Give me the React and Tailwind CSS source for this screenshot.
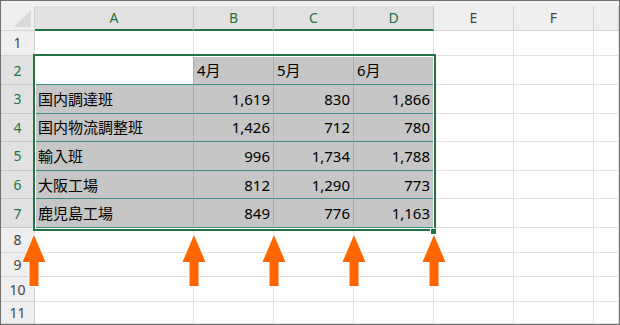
import React from 'react'

const cols = ['A', 'B', 'C', 'D', 'E', 'F', '']
const colWidths = ['w-[159px]', 'w-[80px]', 'w-[80px]', 'w-[80px]', 'w-[80px]', 'w-[80px]', 'flex-1']

const data = [
  ['', '4月', '5月', '6月'],
  ['国内調達班', '1,619', '830', '1,866'],
  ['国内物流調整班', '1,426', '712', '780'],
  ['輸入班', '996', '1,734', '1,788'],
  ['大阪工場', '812', '1,290', '773'],
  ['鹿児島工場', '849', '776', '1,163'],
]

const rowHeights = {
  1: 'h-[26px]',
  8: 'h-[25px]',
  9: 'h-[25px]',
  10: 'h-[25px]',
  11: 'flex-1',
}

const arrowXs = [34, 194, 274, 354, 434]

const Arrow = ({ cx }) => {
  const pts = [
    [cx, 235],
    [cx + 11.5, 262],
    [cx + 4.5, 262],
    [cx + 4.5, 286],
    [cx - 4.5, 286],
    [cx - 4.5, 262],
    [cx - 11.5, 262],
  ]
  return (
    <polygon
      points={pts.map((p) => p.join(',')).join(' ')}
      fill="#ff6600"
      stroke="#ffffff"
      strokeWidth="2"
      strokeLinejoin="round"
      style={{ paintOrder: 'stroke' }}
    />
  )
}

const Cell = ({ row, col }) => {
  const selected = row >= 2 && row <= 7 && col <= 3
  const width = colWidths[col]
  if (!selected) {
    return <div className={`${width} border-r border-b border-[#e1e1e1] bg-white`} />
  }
  const text = data[row - 2][col]
  const isActive = row === 2 && col === 0
  const numeric = row >= 3 && col >= 1
  return (
    <div
      className={`${width} flex items-center px-[3px] border-r border-r-[#ababab] border-b border-b-[#3d8d85] ${
        isActive ? 'bg-white' : 'bg-[#c6c6c6]'
      } ${numeric ? 'justify-end' : 'justify-start'}`}
    >
      <span className="text-[15px] leading-none text-black pt-[1px]">{text}</span>
    </div>
  )
}

export default function App() {
  const rows = [1, 2, 3, 4, 5, 6, 7, 8, 9, 10, 11]

  return (
    <div
      className="relative w-[620px] h-[325px] border border-[#707070] bg-white overflow-hidden flex flex-col"
      style={{ fontFamily: '"Noto Sans", "Noto Sans CJK JP", sans-serif' }}
    >
      {/* top strip */}
      <div className="h-[5px] bg-[#f0f0f0]" />

      {/* column headers */}
      <div className="h-[25px] flex">
        <div className="w-[34px] relative bg-[#efefef] border-r border-b border-[#d4d4d4]">
          <svg className="absolute inset-0" width="34" height="25">
            <polygon points="13,21 30,21 30,4" fill="#dadada" />
          </svg>
        </div>
        {cols.map((c, i) => {
          const sel = i <= 3
          return (
            <div
              key={i}
              className={`${colWidths[i]} flex items-center justify-center border-r text-[14px] ${
                sel
                  ? 'bg-[#e1e1e1] border-r-[#c6c6c6] border-b-2 border-b-[#217346] text-[#217346]'
                  : 'bg-[#efefef] border-r-[#d4d4d4] border-b border-b-[#d4d4d4] text-[#444444]'
              }`}
            >
              {c}
            </div>
          )
        })}
      </div>

      {/* rows */}
      {rows.map((r) => {
        const sel = r >= 2 && r <= 7
        return (
          <div key={r} className={`flex ${rowHeights[r] || 'h-[29px]'}`}>
            <div
              className={`w-[34px] flex items-center justify-center border-r border-b text-[14px] ${
                sel
                  ? 'bg-[#e1e1e1] border-[#c6c6c6] text-[#217346]'
                  : 'bg-[#efefef] border-[#d4d4d4] text-[#444444]'
              }`}
            >
              {r}
            </div>
            {cols.map((c, i) => (
              <Cell key={i} row={r} col={i} />
            ))}
          </div>
        )
      })}

      {/* selection outline */}
      <div className="absolute left-[32px] top-[53px] w-[403px] h-[177px] border-2 border-[#217346] pointer-events-none">
        <div className="w-full h-full border border-white" />
      </div>

      {/* fill handle */}
      <div className="absolute left-[429px] top-[227px] w-[7px] h-[7px] bg-[#217346] border border-white" />

      {/* arrows */}
      <svg className="absolute left-[-1px] top-[-1px] pointer-events-none" width="620" height="325">
        {arrowXs.map((x) => (
          <Arrow key={x} cx={x} />
        ))}
      </svg>
    </div>
  )
}
